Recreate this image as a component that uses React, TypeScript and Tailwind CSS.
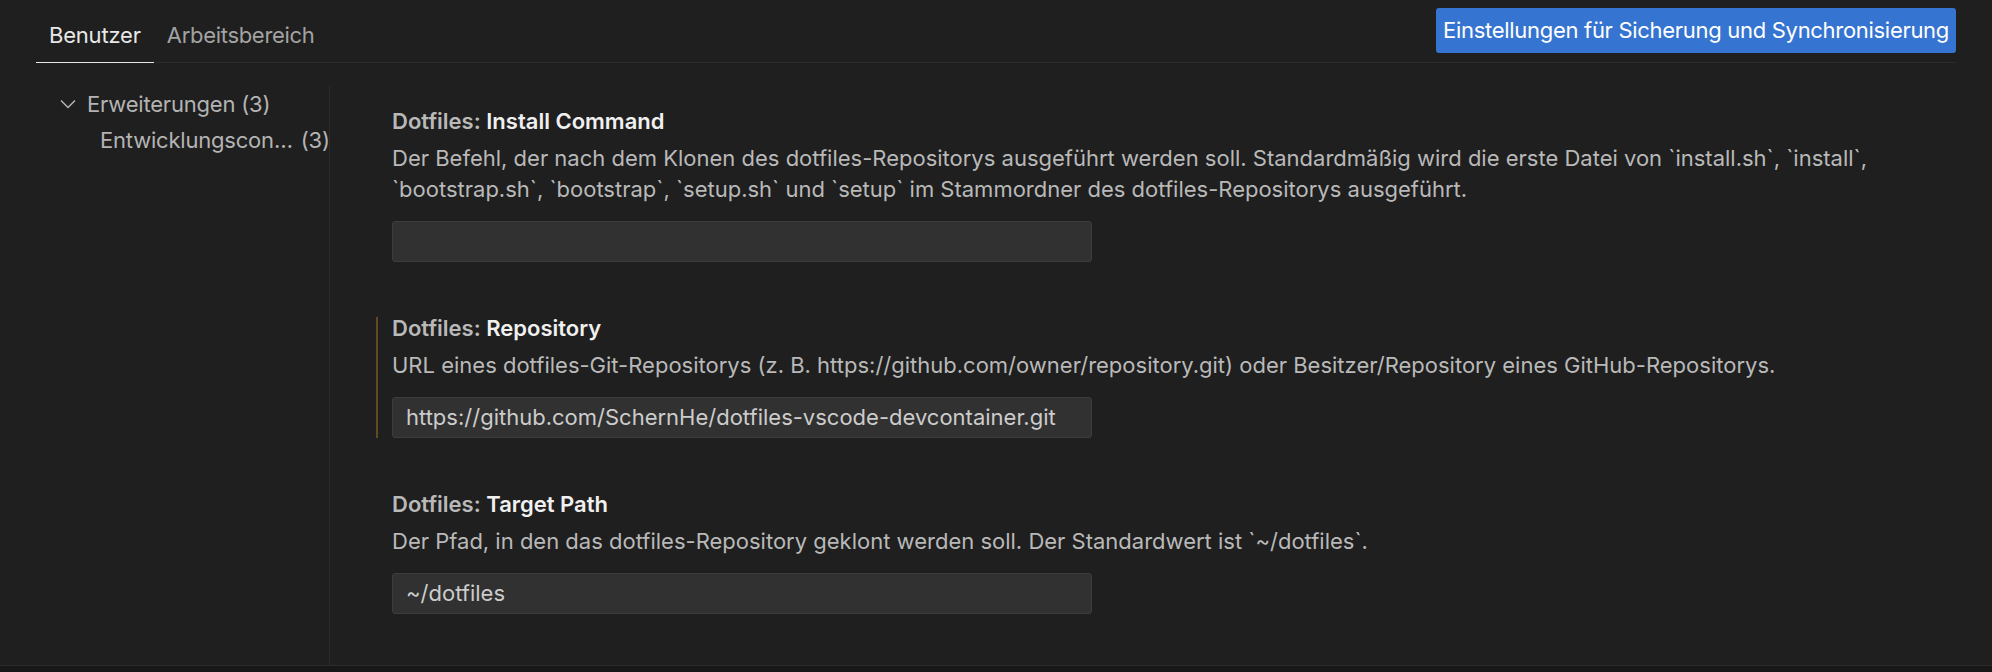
import React from 'react';

const FONT = { fontFamily: 'Inter, "Noto Sans", sans-serif' };

function Chevron() {
    return (
        <svg width="16" height="10" viewBox="0 0 16 10" className="shrink-0">
            <polyline
                points="1,1.5 8,8.5 15,1.5"
                fill="none"
                stroke="#b4b4b4"
                strokeWidth="1.5"
            />
        </svg>
    );
}

type Setting = {
    id: string;
    name: string;
    lines: string[];
    value: string;
    modified?: boolean;
};

const SETTINGS: Setting[] = [
    {
        id: 'install',
        name: 'Install Command',
        lines: [
            'Der Befehl, der nach dem Klonen des dotfiles-Repositorys ausgeführt werden soll. Standardmäßig wird die erste Datei von `install.sh`, `install`,',
            '`bootstrap.sh`, `bootstrap`, `setup.sh` und `setup` im Stammordner des dotfiles-Repositorys ausgeführt.',
        ],
        value: '',
    },
    {
        id: 'repo',
        name: 'Repository',
        lines: [
            'URL eines dotfiles-Git-Repositorys (z. B. https://github.com/owner/repository.git) oder Besitzer/Repository eines GitHub-Repositorys.',
        ],
        value: 'https://github.com/SchernHe/dotfiles-vscode-devcontainer.git',
        modified: true,
    },
    {
        id: 'target',
        name: 'Target Path',
        lines: [
            'Der Pfad, in den das dotfiles-Repository geklont werden soll. Der Standardwert ist `~/dotfiles`.',
        ],
        value: '~/dotfiles',
    },
];

function SettingItem({ s }: { s: Setting }) {
    return (
        <div
            className={
                'border-l-2 pl-[14px] ' +
                (s.modified ? 'border-[#5f4a22]' : 'border-transparent')
            }
        >
            <div className="text-[22px] leading-[23px] font-semibold whitespace-nowrap">
                <span className="text-[#b9b9b9]">Dotfiles: </span>
                <span className="text-[#f0f0f0]">{s.name}</span>
            </div>
            <div className="mt-[10px] text-[22px] leading-[31px] text-[#b9b9b9] whitespace-nowrap">
                {s.lines.map((l, i) => (
                    <div key={i}>{l}</div>
                ))}
            </div>
            <div className="mt-[16px] w-[700px] h-[41px] rounded-[3px] bg-[#313131] border border-[#3c3c3c] flex items-center px-[13px] text-[22px] text-[#cccccc]">
                {s.value}
            </div>
        </div>
    );
}

export default function App() {
    return (
        <div
            className="w-full h-[672px] bg-[#1f1f1f] flex flex-col overflow-hidden"
            style={FONT}
        >
            <div className="mx-[36px] h-[63px] border-b border-[#2b2b2b] flex items-start justify-between">
                <div className="flex h-[62px] items-end">
                    <div className="h-full flex items-end pb-[14px] px-[13px] border-b border-[#e7e7e7] text-[22px] leading-[26px] tracking-[-0.2px] text-[#e8e8e8] -mb-px">
                        Benutzer
                    </div>
                    <div className="h-full flex items-end pb-[14px] px-[13px] text-[22px] leading-[26px] tracking-[-0.3px] text-[#a3a3a3]">
                        Arbeitsbereich
                    </div>
                </div>
                <button className="mt-[8px] h-[45px] px-[7px] rounded-[3px] bg-[#3574d0] text-white text-[22px] tracking-[-0.3px] whitespace-nowrap">
                    Einstellungen für Sicherung und Synchronisierung
                </button>
            </div>

            <div className="flex flex-1 min-h-0">
                <div className="w-[330px] shrink-0 mt-[23px] border-r border-[#2b2b2b] text-[22px] text-[#b4b4b4] tracking-[-0.2px]">
                    <div className="h-[36px] flex items-center gap-[11px] pl-[60px]">
                        <Chevron />
                        <span>Erweiterungen (3)</span>
                    </div>
                    <div className="h-[36px] flex items-center pl-[100px] whitespace-nowrap">
                        <span>Entwicklungscon…</span>
                        <span className="ml-[8px]">(3)</span>
                    </div>
                </div>
                <div className="flex-1 pl-[46px] pt-[47px] flex flex-col gap-[55px]">
                    {SETTINGS.map((s) => (
                        <SettingItem key={s.id} s={s} />
                    ))}
                </div>
            </div>

            <div className="h-[7px] border-t border-[#2b2b2b] bg-[#181818]" />
        </div>
    );
}
